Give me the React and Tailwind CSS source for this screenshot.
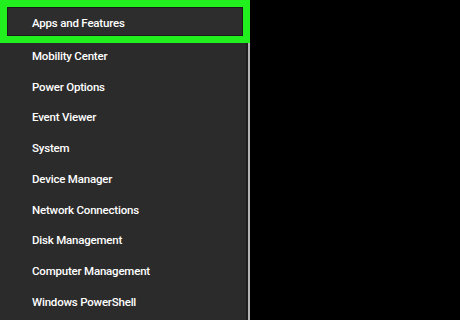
const ITEMS = [
  'Mobility Center',
  'Power Options',
  'Event Viewer',
  'System',
  'Device Manager',
  'Network Connections',
  'Disk Management',
  'Computer Management',
  'Windows PowerShell',
];

export default function App() {
  return (
    <div
      className="flex h-[320px] w-[460px] overflow-hidden bg-black text-white"
      style={{ fontFamily: 'Roboto, "Noto Sans", sans-serif' }}
    >
      <div className="flex h-full w-[250px] flex-col">
        {/* Highlighted item */}
        <div className="h-[43px] w-[250px] border-[7px] border-[#22f01e]">
          <div className="flex h-full items-center border border-[#1a1a1a] bg-[#2d2d2d] pl-[24px] pt-[5px] text-[11.5px] font-medium tracking-[-0.2px]">
            Apps and Features
          </div>
        </div>

        {/* Rest of the menu */}
        <div className="flex flex-1 flex-col border-r-2 border-[#b4b4b4] bg-[#2b2b2b] shadow-[inset_-2px_0_0_#1e1e1e]">
          {ITEMS.map((label) => (
            <div
              key={label}
              className="flex h-[30.75px] items-center pb-[4px] pl-[32px] text-[11.5px] font-medium tracking-[-0.2px]"
            >
              {label}
            </div>
          ))}
        </div>
      </div>
    </div>
  );
}
